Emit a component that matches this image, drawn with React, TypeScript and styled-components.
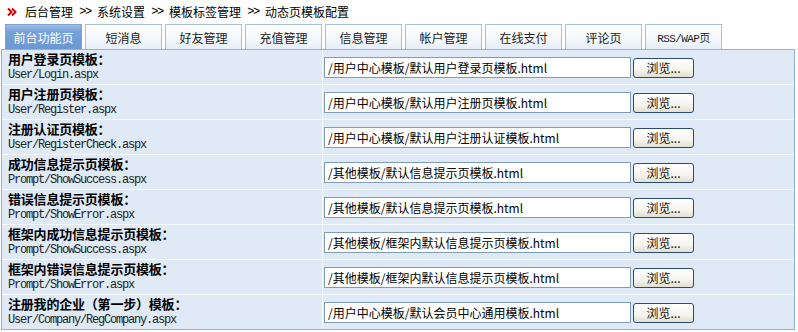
import React from 'react';
import styled, { createGlobalStyle } from 'styled-components';

const GlobalStyle = createGlobalStyle`
    body {
        margin: 0;
        background: #fff;
        font-family: "Noto Sans CJK SC", "Liberation Sans", sans-serif;
        font-size: 12px;
        color: #000;
    }
`;

const Page = styled.div`
    width: 798px;
    padding-left: 1px;
`;

const Breadcrumb = styled.div`
    height: 24px;
    display: flex;
    align-items: center;
    padding-left: 6px;
    font-size: 12px;
    line-height: 24px;
`;

const Crumb = styled.span`
    white-space: nowrap;
`;

const Sep = styled.span`
    display: inline-block;
    width: 24px;
    text-align: center;
    font-family: "Liberation Mono", monospace;
    font-size: 12px;
    letter-spacing: -1.5px;
`;

const TabBar = styled.div`
    display: flex;
    gap: 3px;
    padding-left: 4px;
    height: 25px;
`;

const Tab = styled.div<{ $active?: boolean }>`
    width: 77px;
    box-sizing: border-box;
    height: 25px;
    display: flex;
    align-items: center;
    justify-content: center;
    font-size: 12px;
    color: ${p => (p.$active ? '#fff' : '#222')};
    border: 1px solid ${p => (p.$active ? '#7ea4d6' : '#a7c0de')};
    border-bottom: none;
    background: ${p =>
        p.$active
            ? 'linear-gradient(#9dbde6 0%, #78a2d9 25%, #6a98d4 100%)'
            : 'linear-gradient(#ffffff 0%, #f4f8fc 60%, #e6eef8 100%)'};
    &.mono {
        font-family: "Liberation Mono", "Noto Sans CJK SC", monospace;
        font-size: 11px;
        letter-spacing: -0.6px;
    }
`;

const Table = styled.div`
    display: grid;
    grid-template-columns: 320px 1fr;
    grid-auto-rows: 34px;
    gap: 1px;
    width: 794px;
    box-sizing: border-box;
    background: #f7fafd;
    border: 1px solid #8fb2de;
`;

const LabelCell = styled.div`
    background: #dfeaf6;
    padding: 1px 6px 0;
    display: flex;
    flex-direction: column;
`;

const Title = styled.div`
    font-weight: bold;
    font-size: 13px;
    line-height: 16px;
    letter-spacing: -0.2px;
    white-space: nowrap;
`;

const Path = styled.div`
    font-family: "Liberation Mono", monospace;
    font-size: 12px;
    letter-spacing: -1.2px;
    line-height: 16px;
    color: #222;
`;

const FieldCell = styled.div`
    background: #dfeaf6;
    display: flex;
    align-items: center;
    gap: 2px;
    padding: 1px 0 0 1px;
`;

const TextInput = styled.input`
    width: 307px;
    height: 21px;
    box-sizing: border-box;
    border: 1px solid #7f9db9;
    background: #fff;
    padding: 0 3px;
    font-family: "Noto Sans CJK SC", sans-serif;
    font-size: 12px;
    color: #000;
    outline: none;
`;

const BrowseButton = styled.button`
    width: 61px;
    height: 20px;
    box-sizing: border-box;
    border: 1px solid #2b4a78;
    border-radius: 3px;
    background: linear-gradient(#ffffff 0%, #f5f4ee 60%, #e2dfd2 100%);
    font-family: "Noto Sans CJK SC", sans-serif;
    font-size: 12px;
    color: #111;
    padding: 0;
    line-height: 18px;
`;

const Chevrons = () => (
    <svg width="10" height="10" viewBox="0 0 10 10" style={{ marginRight: 8 }}>
        <path d="M1 1.5 L4.5 5 L1 8.5 M5 1.5 L8.5 5 L5 8.5" stroke="#d40000" strokeWidth="2" fill="none" />
    </svg>
);

const tabs = ['前台功能页', '短消息', '好友管理', '充值管理', '信息管理', '帐户管理', '在线支付', '评论页', 'RSS/WAP页'];

const rows = [
    ['用户登录页模板：', 'User/Login.aspx', '/用户中心模板/默认用户登录页模板.html'],
    ['用户注册页模板：', 'User/Register.aspx', '/用户中心模板/默认用户注册页模板.html'],
    ['注册认证页模板：', 'User/RegisterCheck.aspx', '/用户中心模板/默认用户注册认证模板.html'],
    ['成功信息提示页模板：', 'Prompt/ShowSuccess.aspx', '/其他模板/默认信息提示页模板.html'],
    ['错误信息提示页模板：', 'Prompt/ShowError.aspx', '/其他模板/默认信息提示页模板.html'],
    ['框架内成功信息提示页模板：', 'Prompt/ShowSuccess.aspx', '/其他模板/框架内默认信息提示页模板.html'],
    ['框架内错误信息提示页模板：', 'Prompt/ShowError.aspx', '/其他模板/框架内默认信息提示页模板.html'],
    ['注册我的企业（第一步）模板：', 'User/Company/RegCompany.aspx', '/用户中心模板/默认会员中心通用模板.html'],
];

function App() {
    return (
        <Page>
            <GlobalStyle />
            <Breadcrumb>
                <Chevrons />
                <Crumb>后台管理</Crumb>
                <Sep>&gt;&gt;</Sep>
                <Crumb>系统设置</Crumb>
                <Sep>&gt;&gt;</Sep>
                <Crumb>模板标签管理</Crumb>
                <Sep>&gt;&gt;</Sep>
                <Crumb>动态页模板配置</Crumb>
            </Breadcrumb>
            <TabBar>
                {tabs.map((t, i) => (
                    <Tab key={t} $active={i === 0} className={t.startsWith('RSS') ? 'mono' : undefined}>
                        {t}
                    </Tab>
                ))}
            </TabBar>
            <Table>
                {rows.map(([title, path, value]) => (
                    <React.Fragment key={title + path}>
                        <LabelCell>
                            <Title>{title}</Title>
                            <Path>{path}</Path>
                        </LabelCell>
                        <FieldCell>
                            <TextInput defaultValue={value} />
                            <BrowseButton>浏览...</BrowseButton>
                        </FieldCell>
                    </React.Fragment>
                ))}
            </Table>
        </Page>
    );
}

export default App;
